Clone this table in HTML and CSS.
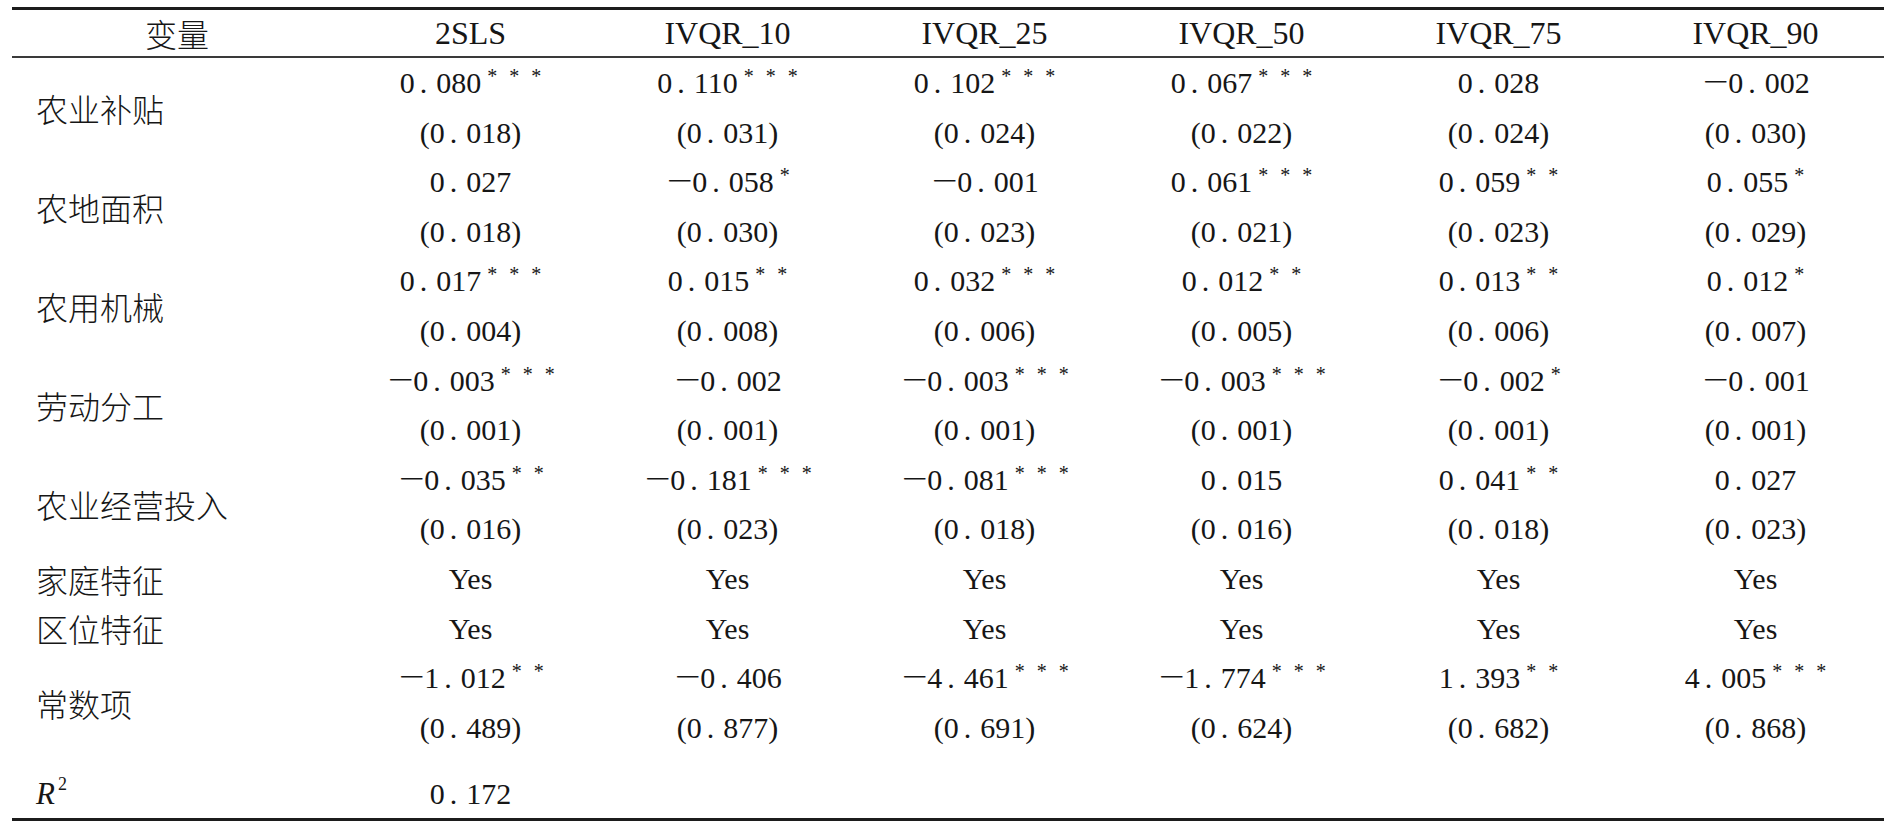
FILE: index.html
```html
<!DOCTYPE html>
<html lang="zh">
<head>
<meta charset="utf-8">
<title>回归结果</title>
<link rel="stylesheet" href="styles.css">
</head>
<body>
<table class="tbl">
  <colgroup>
    <col class="c-lab">
    <col class="c-dat"><col class="c-dat"><col class="c-dat"><col class="c-dat"><col class="c-dat"><col class="c-dat">
  </colgroup>
  <thead>
    <tr>
      <th class="zh">变量</th>
      <th>2SLS</th>
      <th>IVQR_10</th>
      <th>IVQR_25</th>
      <th>IVQR_50</th>
      <th>IVQR_75</th>
      <th>IVQR_90</th>
    </tr>
  </thead>
  <tbody>
    <tr>
      <td class="lab">农业补贴</td>
      <td><div class="v">0<span class="pt">.</span>080<span class="st">***</span></div><div class="s">(0<span class="pt">.</span>018)</div></td>
      <td><div class="v">0<span class="pt">.</span>110<span class="st">***</span></div><div class="s">(0<span class="pt">.</span>031)</div></td>
      <td><div class="v">0<span class="pt">.</span>102<span class="st">***</span></div><div class="s">(0<span class="pt">.</span>024)</div></td>
      <td><div class="v">0<span class="pt">.</span>067<span class="st">***</span></div><div class="s">(0<span class="pt">.</span>022)</div></td>
      <td><div class="v">0<span class="pt">.</span>028</div><div class="s">(0<span class="pt">.</span>024)</div></td>
      <td><div class="v"><span class="mn">－</span>0<span class="pt">.</span>002</div><div class="s">(0<span class="pt">.</span>030)</div></td>
    </tr>
    <tr>
      <td class="lab">农地面积</td>
      <td><div class="v">0<span class="pt">.</span>027</div><div class="s">(0<span class="pt">.</span>018)</div></td>
      <td><div class="v"><span class="mn">－</span>0<span class="pt">.</span>058<span class="st">*</span></div><div class="s">(0<span class="pt">.</span>030)</div></td>
      <td><div class="v"><span class="mn">－</span>0<span class="pt">.</span>001</div><div class="s">(0<span class="pt">.</span>023)</div></td>
      <td><div class="v">0<span class="pt">.</span>061<span class="st">***</span></div><div class="s">(0<span class="pt">.</span>021)</div></td>
      <td><div class="v">0<span class="pt">.</span>059<span class="st">**</span></div><div class="s">(0<span class="pt">.</span>023)</div></td>
      <td><div class="v">0<span class="pt">.</span>055<span class="st">*</span></div><div class="s">(0<span class="pt">.</span>029)</div></td>
    </tr>
    <tr>
      <td class="lab">农用机械</td>
      <td><div class="v">0<span class="pt">.</span>017<span class="st">***</span></div><div class="s">(0<span class="pt">.</span>004)</div></td>
      <td><div class="v">0<span class="pt">.</span>015<span class="st">**</span></div><div class="s">(0<span class="pt">.</span>008)</div></td>
      <td><div class="v">0<span class="pt">.</span>032<span class="st">***</span></div><div class="s">(0<span class="pt">.</span>006)</div></td>
      <td><div class="v">0<span class="pt">.</span>012<span class="st">**</span></div><div class="s">(0<span class="pt">.</span>005)</div></td>
      <td><div class="v">0<span class="pt">.</span>013<span class="st">**</span></div><div class="s">(0<span class="pt">.</span>006)</div></td>
      <td><div class="v">0<span class="pt">.</span>012<span class="st">*</span></div><div class="s">(0<span class="pt">.</span>007)</div></td>
    </tr>
    <tr>
      <td class="lab">劳动分工</td>
      <td><div class="v"><span class="mn">－</span>0<span class="pt">.</span>003<span class="st">***</span></div><div class="s">(0<span class="pt">.</span>001)</div></td>
      <td><div class="v"><span class="mn">－</span>0<span class="pt">.</span>002</div><div class="s">(0<span class="pt">.</span>001)</div></td>
      <td><div class="v"><span class="mn">－</span>0<span class="pt">.</span>003<span class="st">***</span></div><div class="s">(0<span class="pt">.</span>001)</div></td>
      <td><div class="v"><span class="mn">－</span>0<span class="pt">.</span>003<span class="st">***</span></div><div class="s">(0<span class="pt">.</span>001)</div></td>
      <td><div class="v"><span class="mn">－</span>0<span class="pt">.</span>002<span class="st">*</span></div><div class="s">(0<span class="pt">.</span>001)</div></td>
      <td><div class="v"><span class="mn">－</span>0<span class="pt">.</span>001</div><div class="s">(0<span class="pt">.</span>001)</div></td>
    </tr>
    <tr>
      <td class="lab">农业经营投入</td>
      <td><div class="v"><span class="mn">－</span>0<span class="pt">.</span>035<span class="st">**</span></div><div class="s">(0<span class="pt">.</span>016)</div></td>
      <td><div class="v"><span class="mn">－</span>0<span class="pt">.</span>181<span class="st">***</span></div><div class="s">(0<span class="pt">.</span>023)</div></td>
      <td><div class="v"><span class="mn">－</span>0<span class="pt">.</span>081<span class="st">***</span></div><div class="s">(0<span class="pt">.</span>018)</div></td>
      <td><div class="v">0<span class="pt">.</span>015</div><div class="s">(0<span class="pt">.</span>016)</div></td>
      <td><div class="v">0<span class="pt">.</span>041<span class="st">**</span></div><div class="s">(0<span class="pt">.</span>018)</div></td>
      <td><div class="v">0<span class="pt">.</span>027</div><div class="s">(0<span class="pt">.</span>023)</div></td>
    </tr>
    <tr>
      <td class="lab">家庭特征</td>
      <td><div class="v">Yes</div></td>
      <td><div class="v">Yes</div></td>
      <td><div class="v">Yes</div></td>
      <td><div class="v">Yes</div></td>
      <td><div class="v">Yes</div></td>
      <td><div class="v">Yes</div></td>
    </tr>
    <tr>
      <td class="lab">区位特征</td>
      <td><div class="v">Yes</div></td>
      <td><div class="v">Yes</div></td>
      <td><div class="v">Yes</div></td>
      <td><div class="v">Yes</div></td>
      <td><div class="v">Yes</div></td>
      <td><div class="v">Yes</div></td>
    </tr>
    <tr>
      <td class="lab">常数项</td>
      <td><div class="v"><span class="mn">－</span>1<span class="pt">.</span>012<span class="st">**</span></div><div class="s">(0<span class="pt">.</span>489)</div></td>
      <td><div class="v"><span class="mn">－</span>0<span class="pt">.</span>406</div><div class="s">(0<span class="pt">.</span>877)</div></td>
      <td><div class="v"><span class="mn">－</span>4<span class="pt">.</span>461<span class="st">***</span></div><div class="s">(0<span class="pt">.</span>691)</div></td>
      <td><div class="v"><span class="mn">－</span>1<span class="pt">.</span>774<span class="st">***</span></div><div class="s">(0<span class="pt">.</span>624)</div></td>
      <td><div class="v">1<span class="pt">.</span>393<span class="st">**</span></div><div class="s">(0<span class="pt">.</span>682)</div></td>
      <td><div class="v">4<span class="pt">.</span>005<span class="st">***</span></div><div class="s">(0<span class="pt">.</span>868)</div></td>
    </tr>
    <tr class="r2">
      <td class="lab lab-r"><span class="it">R</span><span class="sq">2</span></td>
      <td><div class="v">0<span class="pt">.</span>172</div></td>
      <td></td>
      <td></td>
      <td></td>
      <td></td>
      <td></td>
    </tr>
  </tbody>
</table>
</body>
</html>
```

FILE: styles.css
```css
* {
  box-sizing: border-box;
}

html,
body {
  margin: 0;
  padding: 0;
  background: #ffffff;
}

body {
  font-family: "Liberation Serif", "Noto Sans CJK SC", serif;
  color: #161616;
}

.tbl {
  margin: 7px 0 0 12px;
  width: 1872px;
  border-collapse: separate;
  border-spacing: 0;
  table-layout: fixed;
  border-top: 3px solid #1c1c1c;
  border-bottom: 3px solid #1c1c1c;
}

.c-lab {
  width: 330px;
}

.c-dat {
  width: 257px;
}

.tbl th {
  font-weight: normal;
  font-size: 32px;
  line-height: 46px;
  height: 48px;
  padding: 0;
  text-align: center;
  border-bottom: 2px solid #3a3a3a;
  white-space: nowrap;
}

.tbl th.zh {
  font-family: "Noto Sans CJK SC", sans-serif;
  font-weight: 300;
  font-size: 32px;
}

.tbl td {
  padding: 0;
  vertical-align: middle;
  text-align: center;
  font-size: 30px;
}

.tbl td.lab {
  text-align: left;
  padding-left: 24px;
  font-family: "Noto Sans CJK SC", sans-serif;
  font-weight: 300;
  font-size: 32px;
  line-height: 40px;
  white-space: nowrap;
}

.v,
.s {
  height: 49.6px;
  line-height: 49.6px;
  white-space: nowrap;
}

.pt {
  padding: 0 9px 0 5px;
}

.mn {
  font-family: "Noto Sans CJK SC", sans-serif;
  font-weight: 300;
  font-size: 29px;
  line-height: 0;
  margin-right: -2px;
}

.st {
  font-size: 20px;
  line-height: 0;
  letter-spacing: 12px;
  margin-left: 6px;
  margin-right: -12px;
  vertical-align: 10px;
}

.r2 td {
  padding-top: 17px;
}

.r2 .v {
  height: 49px;
  line-height: 49px;
}

.tbl td.lab-r {
  font-family: "Liberation Serif", serif;
  font-size: 31px;
  line-height: 49px;
}

.it {
  font-style: italic;
}

.sq {
  font-size: 18px;
  line-height: 0;
  margin-left: 3px;
  vertical-align: 14px;
}
```
